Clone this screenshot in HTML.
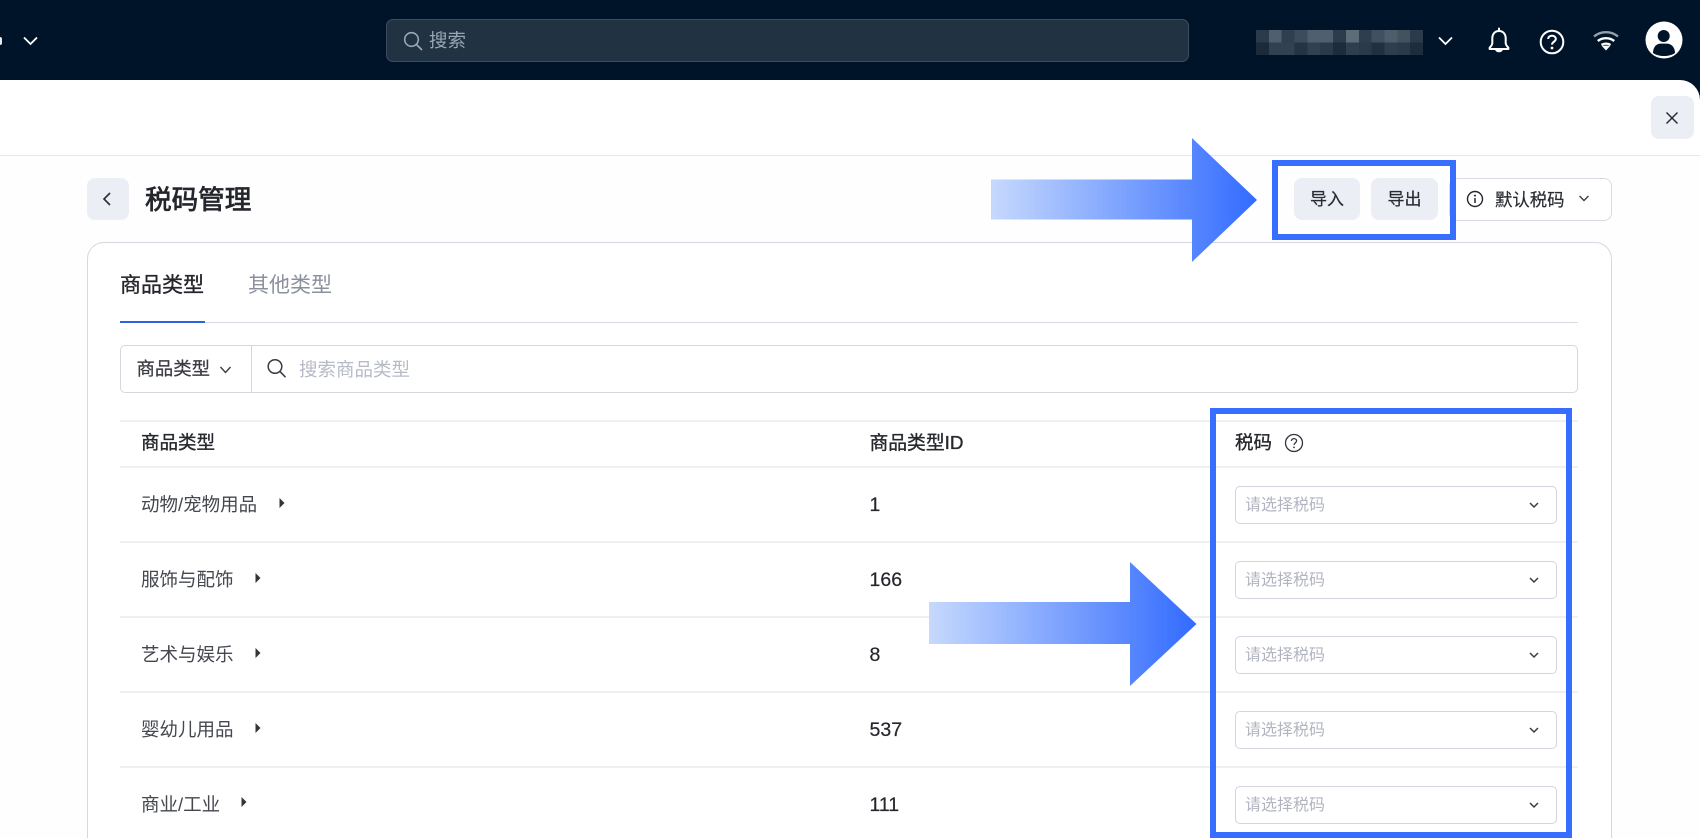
<!DOCTYPE html>
<html lang="zh-CN">
<head>
<meta charset="utf-8">
<title>税码管理</title>
<style>
html,body{margin:0;padding:0;width:1700px;height:838px;overflow:hidden;background:#001429;}
body{font-family:"Liberation Sans","Noto Sans CJK SC",sans-serif;color:#25272e;}
#w{position:absolute;left:0;top:0;width:1700px;height:838px;overflow:hidden;filter:blur(.35px);}
.a{position:absolute;}
.t{position:absolute;white-space:nowrap;line-height:24px;height:24px;}
.line{position:absolute;left:120px;width:1458px;height:2px;background:#f0f0f3;}
.sel{position:absolute;left:1235px;width:320px;height:36px;border:1px solid #d3d5df;border-radius:5px;background:#fff;}
.sel span{position:absolute;left:9px;top:7px;line-height:24px;font-size:16px;color:#b2b5c0;white-space:nowrap;}
.sel svg{position:absolute;left:292px;top:14px;}
.btn{position:absolute;top:178px;height:42px;background:#eceef5;border-radius:8px;font-size:17px;line-height:44px;text-align:center;color:#2a2c33;-webkit-text-stroke:.2px #2a2c33;}
.name{font-size:18.5px;color:#45474f;}
.num{font-size:19.5px;color:#24262c;-webkit-text-stroke:.2px #24262c;}
.h{font-size:18.5px;color:#26282e;-webkit-text-stroke:.35px #26282e;}
</style>
</head>
<body>
<div id="w">
<!-- main panel -->
<div class="a" style="left:0;top:80px;width:1700px;height:758px;background:#fff;border-top-right-radius:20px;"></div>
<div class="a" style="left:0;top:155px;width:1700px;height:683px;background:#fefefe;"></div>
<div class="a" style="left:0;top:155px;width:1700px;height:1px;background:#e7e7eb;"></div>

<!-- top bar -->
<div class="a" style="left:0;top:37px;width:2px;height:8px;background:#e8ecf0;border-radius:0 2px 2px 0;"></div>
<svg class="a" style="left:22px;top:35px" width="17" height="11" viewBox="0 0 17 11"><path d="M2 2.5 L8.5 9 L15 2.5" fill="none" stroke="#fff" stroke-width="1.8"/></svg>
<div class="a" style="left:386px;top:19px;width:801px;height:41px;background:#213243;border:1px solid #3d4d5d;border-radius:7px;"></div>
<svg class="a" style="left:402px;top:30px" width="22" height="22" viewBox="0 0 22 22"><circle cx="9.5" cy="9.5" r="6.8" fill="none" stroke="#9aa6b2" stroke-width="1.6"/><path d="M14.6 14.6 L20 20" stroke="#9aa6b2" stroke-width="1.7" fill="none"/></svg>
<div class="t" style="left:429px;top:29px;font-size:18.5px;color:#9aa6b2;">搜索</div>

<svg class="a" style="left:1256px;top:30px" width="167" height="25" viewBox="0 0 13 2" preserveAspectRatio="none" shape-rendering="crispEdges">
<rect x="0" y="0" width="1" height="1" fill="#2b3b4c"/><rect x="1" y="0" width="1" height="1" fill="#4f5f6e"/><rect x="2" y="0" width="1" height="1" fill="#2f3f4f"/><rect x="3" y="0" width="1" height="1" fill="#3c4c5c"/><rect x="4" y="0" width="1" height="1" fill="#505f6d"/><rect x="5" y="0" width="1" height="1" fill="#505f6d"/><rect x="6" y="0" width="1" height="1" fill="#2c3c4c"/><rect x="7" y="0" width="1" height="1" fill="#5d6c79"/><rect x="8" y="0" width="1" height="1" fill="#2e3e4e"/><rect x="9" y="0" width="1" height="1" fill="#405060"/><rect x="10" y="0" width="1" height="1" fill="#4e5d6c"/><rect x="11" y="0" width="1" height="1" fill="#42525f"/><rect x="12" y="0" width="1" height="1" fill="#2b3b4b"/>
<rect x="0" y="1" width="1" height="1" fill="#1b2b3c"/><rect x="1" y="1" width="1" height="1" fill="#314152"/><rect x="2" y="1" width="1" height="1" fill="#314152"/><rect x="3" y="1" width="1" height="1" fill="#243445"/><rect x="4" y="1" width="1" height="1" fill="#314152"/><rect x="5" y="1" width="1" height="1" fill="#2a3a4b"/><rect x="6" y="1" width="1" height="1" fill="#1c2c3d"/><rect x="7" y="1" width="1" height="1" fill="#2e3e4f"/><rect x="8" y="1" width="1" height="1" fill="#2a3a4b"/><rect x="9" y="1" width="1" height="1" fill="#203041"/><rect x="10" y="1" width="1" height="1" fill="#2e3e4f"/><rect x="11" y="1" width="1" height="1" fill="#2a3a4b"/><rect x="12" y="1" width="1" height="1" fill="#1d2d3e"/>
</svg>
<svg class="a" style="left:1437px;top:35px" width="17" height="11" viewBox="0 0 17 11"><path d="M2 2.5 L8.5 9 L15 2.5" fill="none" stroke="#fff" stroke-width="1.8"/></svg>
<!-- bell -->
<svg class="a" style="left:1486px;top:27px" width="26" height="27" viewBox="0 0 26 27"><path d="M13 1.5 V4 M13 4 C8.5 4 6.3 7.5 6.3 11.5 V16 C6.3 18.2 4.6 19.5 3.6 20.8 V22 H22.4 V20.8 C21.4 19.5 19.7 18.2 19.7 16 V11.5 C19.7 7.5 17.5 4 13 4 Z" fill="none" stroke="#fff" stroke-width="2" stroke-linejoin="round" stroke-linecap="round"/><path d="M9 22.5 C10 26.2 16 26.2 17 22.5 Z" fill="#fff"/></svg>
<!-- help -->
<svg class="a" style="left:1538px;top:28.3px" width="28" height="28" viewBox="0 0 28 28"><circle cx="14" cy="14" r="11.3" fill="none" stroke="#fff" stroke-width="2"/><path d="M10.2 11 C10.2 8.8 12 7.7 14 7.7 C16.2 7.7 17.8 9 17.8 11 C17.8 13.6 14 13.8 14 16.6" fill="none" stroke="#fff" stroke-width="2"/><circle cx="14" cy="20" r="1.4" fill="#fff"/></svg>
<!-- wifi -->
<svg class="a" style="left:1591.5px;top:29px" width="28" height="24" viewBox="0 0 28 24"><path d="M2 7.5 C9 1.8 19 1.8 26 7.5" fill="none" stroke="#93a0aa" stroke-width="2.4"/><path d="M5.8 12 C10.5 8.3 17.5 8.3 22.2 12" fill="none" stroke="#fff" stroke-width="2.4"/><path d="M9.5 15.8 C12 14.2 16 14.2 18.5 15.8" fill="none" stroke="#fff" stroke-width="2.2"/><path d="M9.5 16.6 H18.5 L14 21.5 Z" fill="#fff"/></svg>
<!-- avatar -->
<svg class="a" style="left:1645px;top:21px" width="38" height="38" viewBox="0 0 38 38"><circle cx="19" cy="19" r="18.5" fill="#fff"/><circle cx="18.7" cy="15" r="6" fill="#001429"/><path d="M8 32 C8 26 11.5 22.8 15 22.6 H22.5 C26 22.8 30 26 30 32 C24 36 14 36 8 32 Z" fill="#001429"/></svg>

<!-- close -->
<div class="a" style="left:1651px;top:96px;width:43px;height:43px;background:#eceef5;border-radius:8px;"></div>
<svg class="a" style="left:1665px;top:111px" width="14" height="14" viewBox="0 0 14 14"><path d="M1.5 1.5 L12.5 12.5 M12.5 1.5 L1.5 12.5" stroke="#2a2c33" stroke-width="1.5" fill="none"/></svg>

<!-- heading -->
<div class="a" style="left:87px;top:178px;width:42px;height:42px;background:#eceef5;border-radius:8px;"></div>
<svg class="a" style="left:101px;top:191px" width="12" height="16" viewBox="0 0 12 16"><path d="M9 2 L3 8 L9 14" fill="none" stroke="#2a2c33" stroke-width="1.6"/></svg>
<div class="t" style="left:145px;top:184.5px;height:30px;line-height:30px;font-size:26.6px;font-weight:400;-webkit-text-stroke:.75px #24262c;color:#24262c;">税码管理</div>

<div class="btn" style="left:1294px;width:66px;">导入</div>
<div class="btn" style="left:1371px;width:67px;">导出</div>
<div class="a" style="left:1449px;top:178px;width:161px;height:41px;border:1px solid #d9dae2;border-radius:8px;background:#fff;"></div>
<svg class="a" style="left:1466px;top:190px" width="18" height="18" viewBox="0 0 18 18"><circle cx="9" cy="9" r="7.5" fill="none" stroke="#25272e" stroke-width="1.4"/><path d="M9 8 V13" stroke="#25272e" stroke-width="1.5"/><circle cx="9" cy="5.6" r="1" fill="#25272e"/></svg>
<div class="t" style="left:1495px;top:188px;font-size:17.4px;color:#2a2c33;-webkit-text-stroke:.2px #2a2c33;">默认税码</div>
<svg class="a" style="left:1578px;top:194px" width="12" height="9" viewBox="0 0 12 9"><path d="M1.5 2 L6 6.5 L10.5 2" fill="none" stroke="#3a3c44" stroke-width="1.4"/></svg>

<!-- card -->
<div class="a" style="left:87px;top:242px;width:1523px;height:620px;border:1px solid #d6d7df;border-radius:17px;background:#fff;"></div>

<!-- tabs -->
<div class="t" style="left:120px;top:274px;font-size:21px;color:#24262c;-webkit-text-stroke:.35px #24262c;">商品类型</div>
<div class="t" style="left:248px;top:274px;font-size:21px;color:#8b909d;">其他类型</div>
<div class="a" style="left:120px;top:322px;width:1458px;height:1px;background:#d8d9e2;"></div>
<div class="a" style="left:120px;top:321px;width:85px;height:2px;background:#2e62e6;"></div>

<!-- filter -->
<div class="a" style="left:120px;top:345px;width:1456px;height:46px;border:1px solid #d6d8e0;border-radius:5px;"></div>
<div class="a" style="left:251px;top:345px;width:1px;height:48px;background:#d6d8e0;"></div>
<div class="t" style="left:136.5px;top:357px;font-size:18.4px;color:#3a3c44;-webkit-text-stroke:.25px #3a3c44;">商品类型</div>
<svg class="a" style="left:219px;top:365px" width="13" height="10" viewBox="0 0 13 10"><path d="M1.5 2 L6.5 7.5 L11.5 2" fill="none" stroke="#3a3c44" stroke-width="1.4"/></svg>
<svg class="a" style="left:266px;top:358px" width="22" height="21" viewBox="0 0 22 21"><circle cx="9" cy="8.5" r="6.8" fill="none" stroke="#3a3c44" stroke-width="1.5"/><path d="M14 13.5 L19.5 19.2" stroke="#3a3c44" stroke-width="1.6" fill="none"/></svg>
<div class="t" style="left:299px;top:358px;font-size:18.5px;color:#b7bbc7;">搜索商品类型</div>

<!-- table lines -->
<div class="line" style="top:420px;"></div>
<div class="line" style="top:466px;"></div>
<div class="line" style="top:541px;"></div>
<div class="line" style="top:616px;"></div>
<div class="line" style="top:691px;"></div>
<div class="line" style="top:766px;"></div>

<!-- header -->
<div class="t h" style="left:141px;top:431px;">商品类型</div>
<div class="t h" style="left:869.5px;top:431px;font-size:18.8px;">商品类型ID</div>
<div class="t h" style="left:1235px;top:431px;">税码</div>
<svg class="a" style="left:1284px;top:432.5px" width="20" height="20" viewBox="0 0 20 20"><circle cx="10" cy="10" r="8.5" fill="none" stroke="#33353c" stroke-width="1.3"/><path d="M7.4 8 C7.4 6.4 8.6 5.6 10 5.6 C11.5 5.6 12.6 6.5 12.6 7.9 C12.6 9.8 10 9.9 10 12" fill="none" stroke="#33353c" stroke-width="1.3"/><circle cx="10" cy="14.4" r=".9" fill="#33353c"/></svg>

<!-- rows -->
<div class="t name" style="left:141px;top:493px;">动物/宠物用品</div>
<svg class="a" style="left:278px;top:497px" width="8" height="12" viewBox="0 0 8 12"><path d="M1.5 1 L6.5 6 L1.5 11 Z" fill="#33353c"/></svg>
<div class="t num" style="left:869.5px;top:492.5px;">1</div>

<div class="t name" style="left:141px;top:568px;">服饰与配饰</div>
<svg class="a" style="left:254px;top:572px" width="8" height="12" viewBox="0 0 8 12"><path d="M1.5 1 L6.5 6 L1.5 11 Z" fill="#33353c"/></svg>
<div class="t num" style="left:869.5px;top:567.5px;">166</div>

<div class="t name" style="left:141px;top:643px;">艺术与娱乐</div>
<svg class="a" style="left:254px;top:647px" width="8" height="12" viewBox="0 0 8 12"><path d="M1.5 1 L6.5 6 L1.5 11 Z" fill="#33353c"/></svg>
<div class="t num" style="left:869.5px;top:642.5px;">8</div>

<div class="t name" style="left:141px;top:718px;">婴幼儿用品</div>
<svg class="a" style="left:254px;top:722px" width="8" height="12" viewBox="0 0 8 12"><path d="M1.5 1 L6.5 6 L1.5 11 Z" fill="#33353c"/></svg>
<div class="t num" style="left:869.5px;top:717.5px;">537</div>

<div class="t name" style="left:141px;top:793px;">商业/工业</div>
<svg class="a" style="left:240px;top:796px" width="8" height="12" viewBox="0 0 8 12"><path d="M1.5 1 L6.5 6 L1.5 11 Z" fill="#33353c"/></svg>
<div class="t num" style="left:869.5px;top:792.5px;">111</div>

<!-- selects -->
<div class="sel" style="top:486px;"><span>请选择税码</span><svg width="12" height="9" viewBox="0 0 12 9"><path d="M2 2 L6 6 L10 2" fill="none" stroke="#3a3c44" stroke-width="1.5"/></svg></div>
<div class="sel" style="top:561px;"><span>请选择税码</span><svg width="12" height="9" viewBox="0 0 12 9"><path d="M2 2 L6 6 L10 2" fill="none" stroke="#3a3c44" stroke-width="1.5"/></svg></div>
<div class="sel" style="top:636px;"><span>请选择税码</span><svg width="12" height="9" viewBox="0 0 12 9"><path d="M2 2 L6 6 L10 2" fill="none" stroke="#3a3c44" stroke-width="1.5"/></svg></div>
<div class="sel" style="top:711px;"><span>请选择税码</span><svg width="12" height="9" viewBox="0 0 12 9"><path d="M2 2 L6 6 L10 2" fill="none" stroke="#3a3c44" stroke-width="1.5"/></svg></div>
<div class="sel" style="top:786px;"><span>请选择税码</span><svg width="12" height="9" viewBox="0 0 12 9"><path d="M2 2 L6 6 L10 2" fill="none" stroke="#3a3c44" stroke-width="1.5"/></svg></div>

<!-- annotations -->
<div class="a" style="left:1272px;top:160px;width:172px;height:68px;border:6px solid #376eff;"></div>
<div class="a" style="left:1210px;top:408px;width:350px;height:418px;border:6px solid #376eff;"></div>
<svg class="a" style="left:0;top:0" width="1700" height="838" viewBox="0 0 1700 838">
<defs>
<linearGradient id="g1" gradientUnits="userSpaceOnUse" x1="991" y1="0" x2="1257" y2="0"><stop offset="0" stop-color="#c6d9fd"/><stop offset="1" stop-color="#326bff"/></linearGradient>
<linearGradient id="g2" gradientUnits="userSpaceOnUse" x1="929" y1="0" x2="1196" y2="0"><stop offset="0" stop-color="#c6d9fd"/><stop offset="1" stop-color="#326bff"/></linearGradient>
</defs>
<path d="M991 179.5 H1192 V138 L1257 200 L1192 262 V219.5 H991 Z" fill="url(#g1)"/>
<path d="M929 602 H1130 V562 L1196.5 624 L1130 686 V644 H929 Z" fill="url(#g2)"/>
</svg>
</div>
</body>
</html>
